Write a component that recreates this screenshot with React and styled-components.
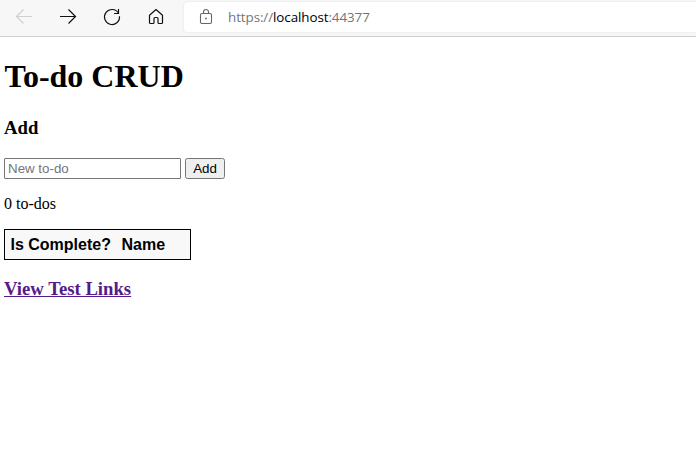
import React from "react";
import styled, { createGlobalStyle } from "styled-components";

const GlobalStyle = createGlobalStyle`
  html, body { margin: 0; background: #fff; }
  body { overflow: hidden; color: #000; font: 16px "Liberation Serif", "Times New Roman", serif; }
`;

const Page = styled.div`
  height: 466px;
`;

const Toolbar = styled.header`
  box-sizing: border-box;
  height: 37px;
  padding: 2px 0 4px 14px;
  display: flex;
  background: #f7f7f7;
  border-bottom: 1px solid #cecece;
`;

const NavButtons = styled.nav`
  display: flex;
  gap: 24px;
  align-items: center;
  width: 170px;
`;

const NavButton = styled.button`
  flex: none;
  width: 20px;
  height: 20px;
  padding: 0;
  border: 0;
  background: none;
  color: ${({ $muted }) => ($muted ? "#cfcfcf" : "#111")};
`;

const Icon = styled.svg`
  display: block;
  fill: none;
  stroke: currentColor;
  stroke-width: ${({ $weight }) => $weight || 1.2};
`;

const AddressBar = styled.div`
  flex: 1;
  height: 30px;
  display: flex;
  align-items: center;
  padding-left: 14px;
  gap: 14px;
  background: #fff;
  border-radius: 4px 0 0 4px;
  box-shadow: 0 0 3px rgba(0, 0, 0, 0.08);
  color: #666;
`;

const Url = styled.span`
  font: 13.4px/20px "Open Sans", "Noto Sans", sans-serif;
  letter-spacing: -0.08px;
  color: #757575;
`;

const Host = styled.span`
  color: #000;
`;

const Content = styled.main`
  padding: 21px 4px 0;
`;

const Title = styled.h1`
  margin: 0;
  font-size: 32px;
  line-height: 37px;
  text-indent: 0.5px;
`;

const Subtitle = styled.h3`
  margin: 22px 0 0;
  font-size: 18.72px;
  line-height: 22px;
`;

const AddForm = styled.form`
  display: flex;
  gap: 4px;
  margin-top: 19px;
`;

const TextInput = styled.input`
  box-sizing: border-box;
  width: 177px;
  height: 21px;
  padding: 1px 3px;
  border: 1px solid #767676;
  border-radius: 1px;
  font: 13.333px "Liberation Sans", Arial, sans-serif;
  &::placeholder { color: #757575; opacity: 1; }
`;

const SubmitButton = styled.button`
  box-sizing: border-box;
  width: 40px;
  height: 21px;
  padding: 0;
  border: 1px solid #767676;
  border-radius: 2.5px;
  background: #efefef;
  color: #000;
  font: 13.333px "Liberation Sans", Arial, sans-serif;
`;

const Counter = styled.p`
  margin: 16px 0;
  line-height: 18px;
`;

const TodoTable = styled.table`
  box-sizing: border-box;
  width: 187px;
  height: 31px;
  table-layout: fixed;
  border: 1px solid #000;
  border-collapse: separate;
  border-spacing: 0;
  background: #f8f8f8;
  font: 16px/19px "Liberation Sans", Arial, sans-serif;
`;

const HeadCell = styled.th`
  width: ${({ $width }) => $width}px;
  box-sizing: border-box;
  padding: 5px 0 5px 5.5px;
  text-align: left;
  white-space: nowrap;
`;

const LinkHeading = styled.h3`
  margin: 18px 0 0;
  font-size: 18.72px;
  line-height: 22px;
`;

const VisitedLink = styled.a`
  color: #551a8b;
  text-decoration: underline;
`;

export default function App() {
  return (
    <Page>
      <GlobalStyle />
      <Toolbar>
        <NavButtons>
          <NavButton $muted aria-label="Back">
            <Icon width="20" height="20" viewBox="0 0 20 20">
              <path d="M18 9.500H2.500M9.500 2.500l-7 7 7 7" />
            </Icon>
          </NavButton>
          <NavButton aria-label="Forward">
            <Icon width="20" height="20" viewBox="0 0 20 20">
              <path d="M2 9.500h15.500M10.500 2.500l7 7-7 7" />
            </Icon>
          </NavButton>
          <NavButton aria-label="Refresh">
            <Icon width="20" height="20" viewBox="0 0 20 20">
              <path d="M17.460 9.200A7.500 7.500 0 1 1 16.500 6.260M16.500 2v4.500H12" />
            </Icon>
          </NavButton>
          <NavButton aria-label="Home">
            <Icon width="20" height="20" viewBox="0 0 20 20" strokeLinejoin="round">
              <path d="M3.500 8.200 10 2.500l6.500 5.700v7.300q0 1-1 1h-2.500q-1 0-1-1v-4q0-1-1-1h-2q-1 0-1 1v4q0 1-1 1h-2.500q-1 0-1-1z" />
            </Icon>
          </NavButton>
        </NavButtons>
        <AddressBar>
          <Icon width="16" height="18" viewBox="0 0 16 18" $weight={1.1}>
            <rect x="2.500" y="5.500" width="11" height="10" rx="1.500" />
            <path d="M5.500 5.500V4a2.500 2.500 0 0 1 5 0v1.500" />
            <circle cx="8" cy="10.500" r="0.900" fill="currentColor" stroke="none" />
          </Icon>
          <Url>https://<Host>localhost</Host>:44377</Url>
        </AddressBar>
      </Toolbar>
      <Content>
        <Title>To-do CRUD</Title>
        <Subtitle>Add</Subtitle>
        <AddForm onSubmit={(event) => event.preventDefault()}>
          <TextInput type="text" placeholder="New to-do" />
          <SubmitButton type="submit">Add</SubmitButton>
        </AddForm>
        <Counter>0 to-dos</Counter>
        <TodoTable>
          <thead>
            <tr>
              <HeadCell $width={111}>Is Complete?</HeadCell>
              <HeadCell $width={54}>Name</HeadCell>
              <HeadCell $width={20} />
            </tr>
          </thead>
        </TodoTable>
        <LinkHeading>
          <VisitedLink href="#">View Test Links</VisitedLink>
        </LinkHeading>
      </Content>
    </Page>
  );
}
